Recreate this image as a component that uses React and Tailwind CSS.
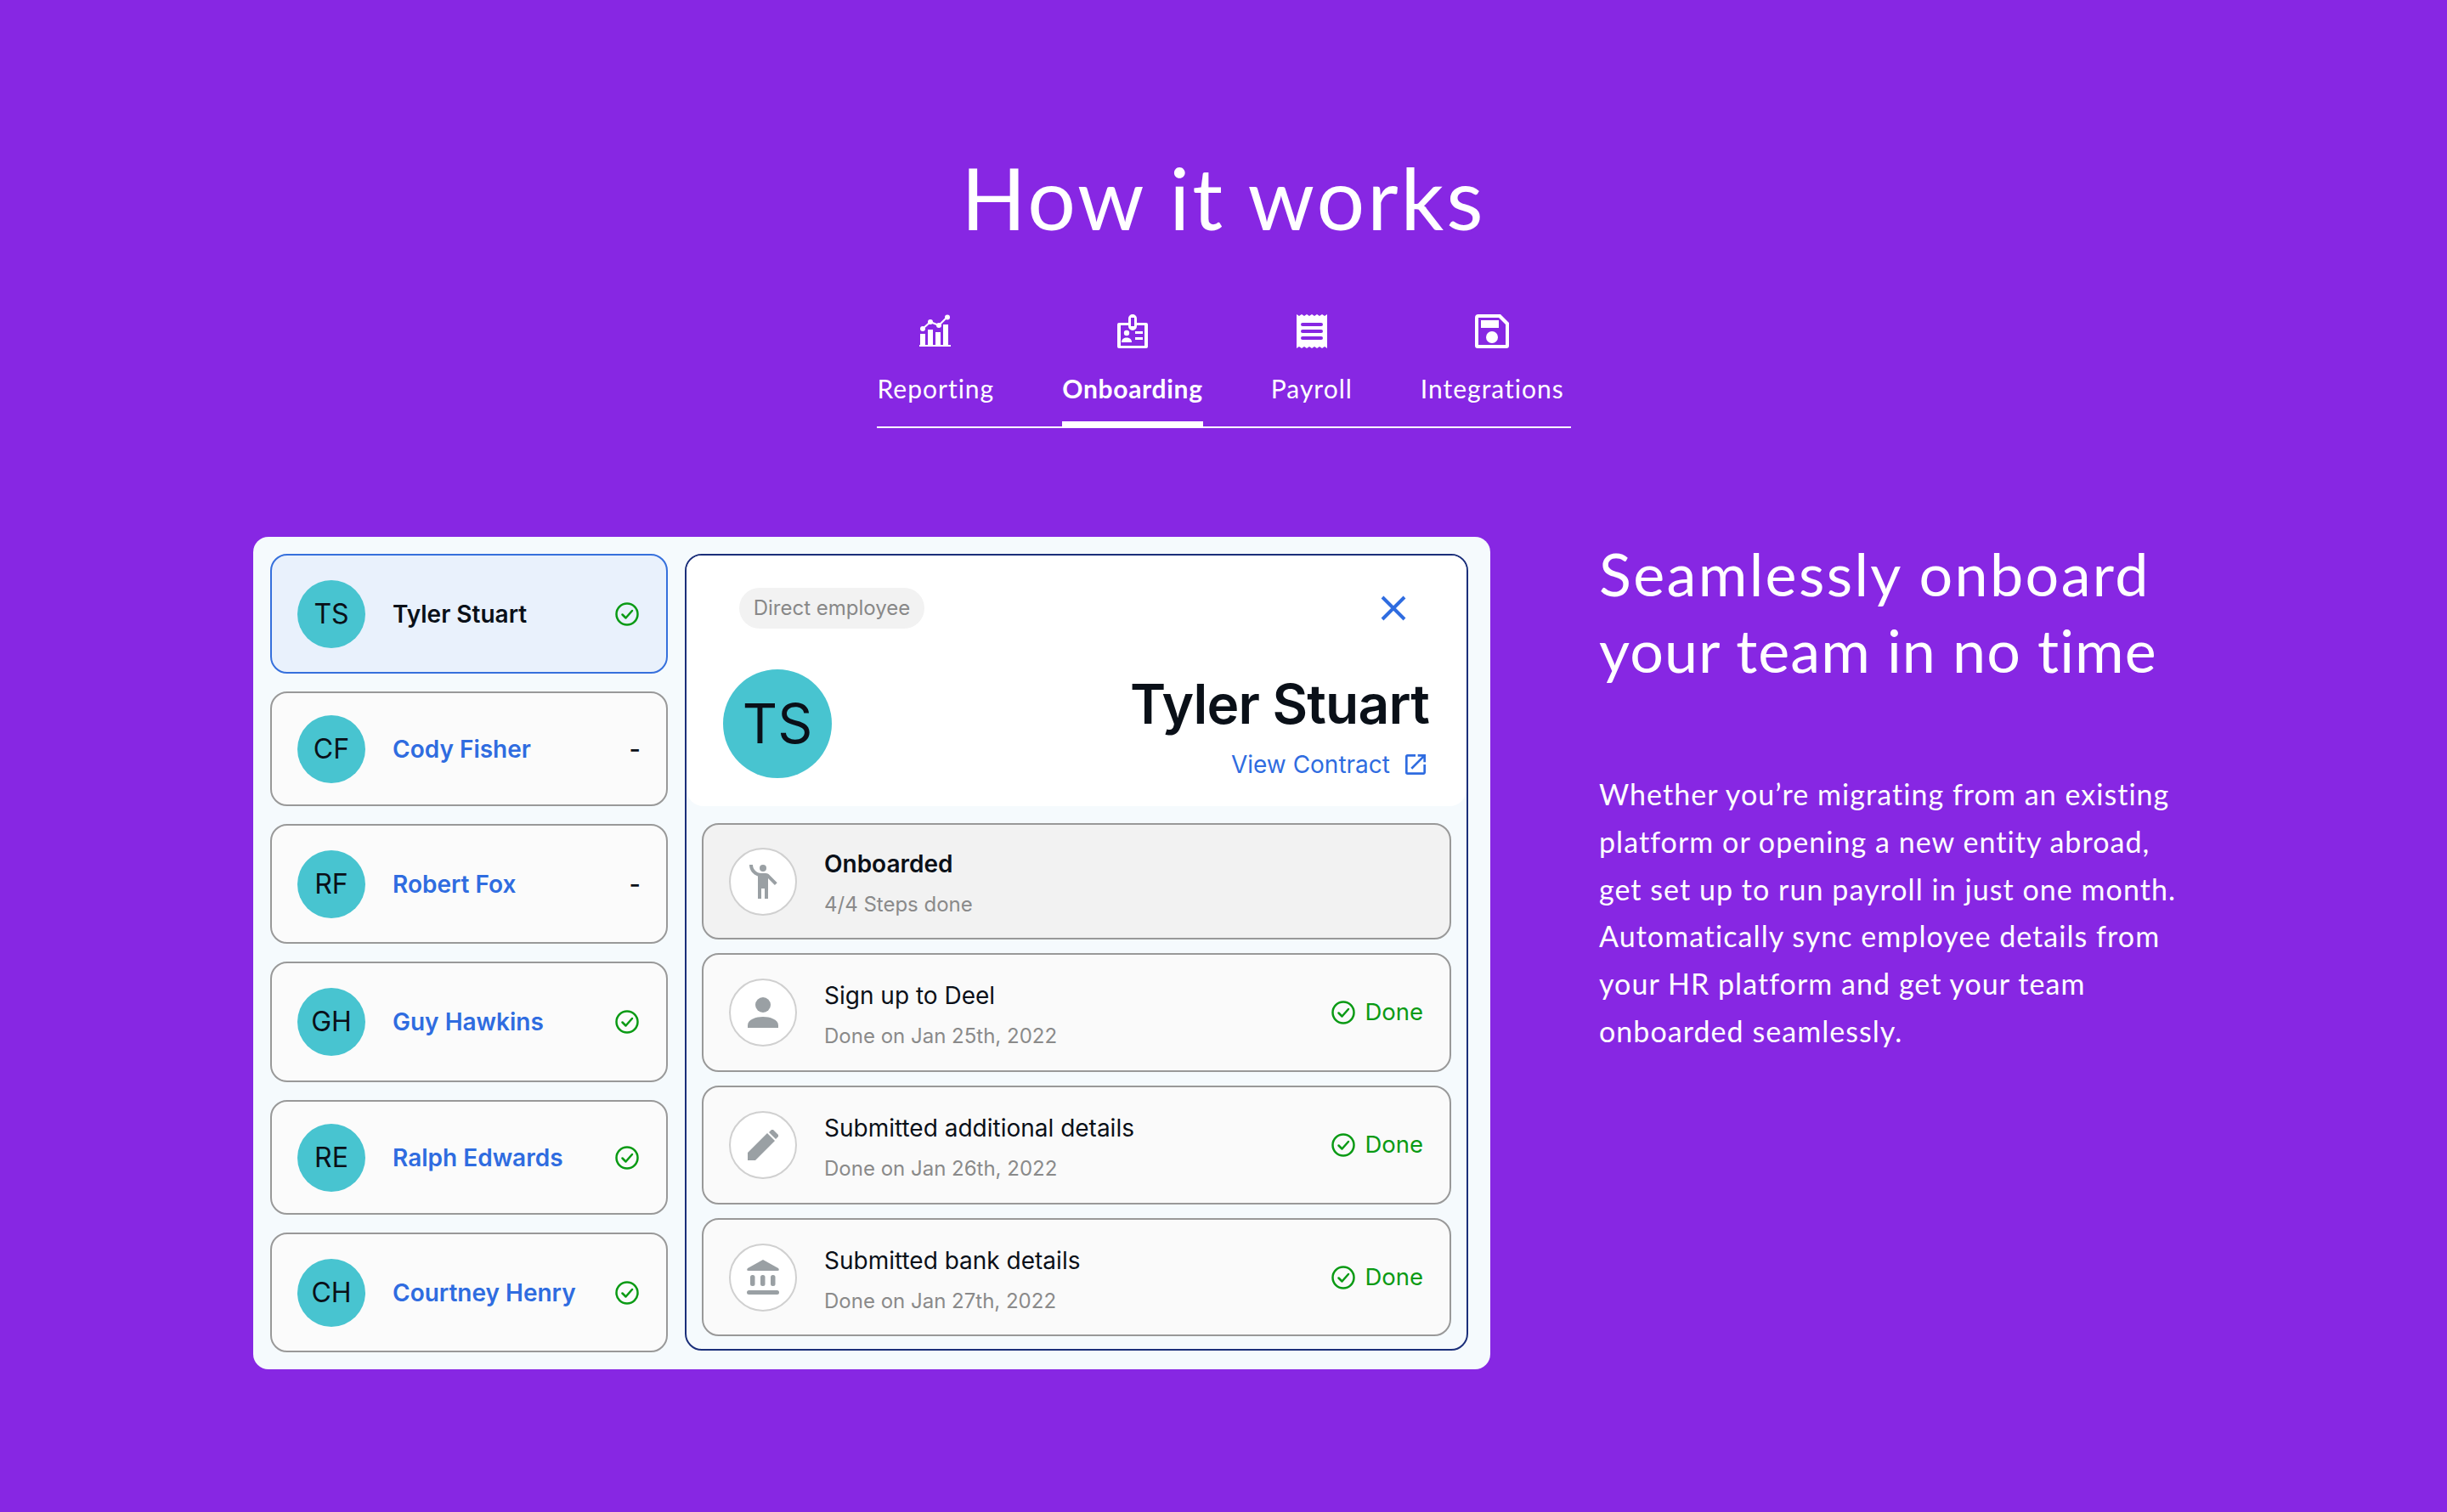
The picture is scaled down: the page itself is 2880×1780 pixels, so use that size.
import React from "react";
import { MdEmojiPeople, MdOpenInNew } from "react-icons/md";

const people = [
  { initials: "TS", name: "Tyler Stuart", done: true, active: true, height: "h-[141px]" },
  { initials: "CF", name: "Cody Fisher", done: false, height: "h-[135px]" },
  { initials: "RF", name: "Robert Fox", done: false, height: "h-[141px]" },
  { initials: "GH", name: "Guy Hawkins", done: true, height: "h-[142px]" },
  { initials: "RE", name: "Ralph Edwards", done: true, height: "h-[135px]" },
  { initials: "CH", name: "Courtney Henry", done: true, height: "h-[141px]" },
];

const PersonGlyph = () => (
  <svg width="36" height="36" viewBox="0 0 36 36" fill="#9aa0a4">
    <circle cx="18" cy="9" r="9" />
    <path d="M0 36v-3C0 26 10 23 18 23s18 3 18 10v3z" />
  </svg>
);

const PencilGlyph = () => (
  <svg width="36" height="36" viewBox="0 0 36 36" fill="#9aa0a4">
    <path d="M0 27 23 4l9 9L9 36H0z" />
    <path d="M25 3l3-3q1-1 2 0l6 6q1 1 0 2l-3 3z" />
  </svg>
);

const BankGlyph = () => (
  <svg width="38" height="41" viewBox="0 0 38 41" fill="#9aa0a4">
    <path d="M19 0 37 10q2 3-1 3H2q-3 0-1-3z" />
    <rect x="4" y="18" width="5.500" height="13" rx="2.500" />
    <rect x="16" y="18" width="5.500" height="13" rx="2.500" />
    <rect x="28" y="18" width="5.500" height="13" rx="2.500" />
    <rect x="0" y="36" width="38" height="5" rx="2.500" />
  </svg>
);

const WaveGlyph = () => <MdEmojiPeople size={48} color="#9aa0a4" />;

const steps = [
  { title: "Sign up to Deel", sub: "Done on Jan 25th, 2022", icon: PersonGlyph, height: "h-[140px]" },
  { title: "Submitted additional details", sub: "Done on Jan 26th, 2022", icon: PencilGlyph, height: "h-[140px]" },
  { title: "Submitted bank details", sub: "Done on Jan 27th, 2022", icon: BankGlyph, height: "h-[139px]" },
];

const ReportingIcon = () => (
  <svg width="40" height="40" viewBox="0 0 40 40" fill="white">
    <rect x="2" y="23" width="6" height="13" />
    <rect x="11" y="18" width="6" height="18" />
    <rect x="20" y="21" width="6" height="15" />
    <rect x="29" y="12" width="6" height="24" />
    <rect x="1" y="36" width="37" height="2" />
    <path d="M5 17 L14 9 L24 13 L34 3" stroke="white" strokeWidth="2" fill="none" />
    <circle cx="5" cy="17" r="3" />
    <circle cx="14" cy="9" r="3" />
    <circle cx="24" cy="13" r="3" />
    <circle cx="34" cy="3.5" r="3" />
  </svg>
);

const BadgeIcon = () => (
  <svg width="40" height="40" viewBox="0 0 40 40" fill="white">
    <path d="M4 10h11v3H6v24h28V13h-9v-3h11a2 2 0 0 1 2 2v26a2 2 0 0 1-2 2H4a2 2 0 0 1-2-2V12a2 2 0 0 1 2-2z" />
    <path fillRule="evenodd" d="M20 0a5 5 0 0 1 5 5v9a5 5 0 0 1-10 0V5a5 5 0 0 1 5-5zm-2 4v10h4V4z" />
    <circle cx="13" cy="22" r="3.2" />
    <path d="M7 33c0-4 3-5.500 6-5.500s6 1.500 6 5.500z" />
    <rect x="23" y="20" width="9" height="3" />
    <rect x="23" y="27" width="9" height="3" />
  </svg>
);

const ReceiptIcon = () => (
  <svg width="40" height="40" viewBox="0 0 40 40" fill="white">
    <path
      fillRule="evenodd"
      d="M2 0l3 2 3-2 3 2 3-2 3 2 3-2 3 2 3-2 3 2 3-2 3 2 3-2v40l-3-2-3 2-3-2-3 2-3-2-3 2-3-2-3 2-3-2-3 2-3-2-3 2zM9 10a2 2 0 0 0 0 4h22a2 2 0 0 0 0-4zM9 18a2 2 0 0 0 0 4h22a2 2 0 0 0 0-4zM9 26a2 2 0 0 0 0 4h22a2 2 0 0 0 0-4z"
    />
  </svg>
);

const SaveIcon = () => (
  <svg width="40" height="40" viewBox="0 0 40 40" fill="white">
    <path
      fillRule="evenodd"
      d="M4 0h26l10 10v27a3 3 0 0 1-3 3H3a3 3 0 0 1-3-3V4a4 4 0 0 1 4-4zm0 4v32h32V12l-8-8z"
    />
    <rect x="7" y="7" width="21" height="9" />
    <circle cx="20" cy="27" r="7" />
  </svg>
);

const tabs = [
  { label: "Reporting", icon: ReportingIcon },
  { label: "Onboarding", icon: BadgeIcon, active: true },
  { label: "Payroll", icon: ReceiptIcon },
  { label: "Integrations", icon: SaveIcon },
];

const CheckIcon = ({ size = 28 }) => (
  <svg width={size} height={size} viewBox="0 0 28 28" fill="none" stroke="#0a9a14" strokeWidth="2.500" className="shrink-0">
    <circle cx="14" cy="14" r="12.500" />
    <path d="M8.500 14.500 L12.500 18.500 L20 10" strokeLinecap="round" strokeLinejoin="round" />
  </svg>
);

function PersonRow({ person }) {
  return (
    <div
      className={`flex items-center pl-[30px] pr-[32px] rounded-[20px] border-2 ${person.height} ${
        person.active ? "bg-[#e9f1fc] border-[#3670dc]" : "bg-[#fbfbfb] border-[#999999]"
      }`}
    >
      <div className="w-[80px] h-[80px] rounded-full bg-[#48c4d0] flex items-center justify-center text-[32px] text-[#0a1018] shrink-0">
        {person.initials}
      </div>
      <div className={`ml-[32px] flex-1 font-semibold text-[28px] ${person.active ? "text-[#0a1018]" : "text-[#2f6ce0]"}`}>
        {person.name}
      </div>
      {person.done ? <CheckIcon /> : <span className="text-[29px] font-medium text-[#0a1018] leading-none -mr-[2px]">-</span>}
    </div>
  );
}

function StepRow({ title, sub, icon: Icon, onboarded, done = true, height }) {
  return (
    <div
      className={`flex items-center pl-[30px] pr-[31px] rounded-[20px] border-2 border-[#999999] ${height} ${
        onboarded ? "bg-[#f2f2f2]" : "bg-[#fafafa]"
      }`}
    >
      <div className="w-[80px] h-[80px] rounded-full bg-white border-2 border-[#d0d0d0] flex items-center justify-center shrink-0">
        <Icon />
      </div>
      <div className={`ml-[32px] flex-1 flex flex-col gap-[12px] ${onboarded ? "pt-[6px]" : "pt-[8px]"}`}>
        <div className={`text-[28px] leading-[36px] text-[#0a1018] ${onboarded ? "font-semibold" : ""}`}>{title}</div>
        <div className="text-[24px] leading-[36px] text-[#8a8a8a]">{sub}</div>
      </div>
      {done && (
        <div className="flex items-center gap-[11px] text-[27.5px] text-[#0a9a14]">
          <CheckIcon />
          <span>Done</span>
        </div>
      )}
    </div>
  );
}

export default function App() {
  return (
    <div className="w-[2880px] h-[1780px] bg-[#8727e3] text-white font-['Lato',sans-serif] overflow-hidden flex flex-col">
      <h1 className="text-center text-[100px] leading-[120px] mt-[172px] font-normal tracking-[3px]">How it works</h1>

      {/* Tabs */}
      <div className="self-center flex gap-[80px] border-b-2 border-white mt-[78px] w-[817px] pl-[1px]">
        {tabs.map(({ label, icon: Icon, active }) => (
          <div key={label} className={`flex flex-col items-center ${active ? "border-b-[8px] border-white -mb-[2px]" : ""}`}>
            <Icon />
            <div className={`mt-[28px] text-[30px] leading-[38px] pb-[20px] ${active ? "font-bold tracking-[0.7px]" : "tracking-[1px]"}`}>
              {label}
            </div>
          </div>
        ))}
      </div>

      <div className="flex mt-[128px] pl-[298px]">
        {/* Product card */}
        <div className="w-[1456px] h-[980px] bg-[#f5fafd] rounded-[18px] flex gap-[20px] pl-[20px] pt-[20px] font-['Inter',sans-serif]">
          <div className="w-[468px] flex flex-col gap-[21px]">
            {people.map((p) => (
              <PersonRow key={p.initials} person={p} />
            ))}
          </div>

          <div className="w-[922px] h-[938px] rounded-[20px] border-2 border-[#1b2f7a] overflow-hidden flex flex-col">
            <div className="bg-white h-[295px] rounded-b-[20px] pl-[62px] pr-[44px] pt-[38px] shrink-0">
              <div className="flex items-center justify-between pr-[27px]">
                <div className="h-[48px] w-[218px] rounded-full bg-[#f2f2f2] text-[24px] text-[#888888] flex items-center justify-center">
                  Direct employee
                </div>
                <svg width="30" height="30" viewBox="0 0 30 30" stroke="#2f6ce0" strokeWidth="4" fill="none">
                  <path d="M2 2 L28 28 M28 2 L2 28" />
                </svg>
              </div>
              <div className="flex items-start justify-between -ml-[19px] mt-[48px]">
                <div className="w-[128px] h-[128px] rounded-full bg-[#48c4d0] flex items-center justify-center text-[64px] text-[#0a1018]">
                  TS
                </div>
                <div className="flex flex-col items-end pt-[5px]">
                  <div className="text-[64px] leading-[72px] font-semibold text-[#0a1018] tracking-[-0.8px]">Tyler Stuart</div>
                  <div className="flex items-center gap-[14px] text-[28px] text-[#2f6ce0] mt-[14px]">
                    View Contract
                    <MdOpenInNew size={32} color="#2f6ce0" />
                  </div>
                </div>
              </div>
            </div>

            <div className="flex flex-col gap-[16px] px-[18px] pt-[20px]">
              <StepRow title="Onboarded" sub="4/4 Steps done" icon={WaveGlyph} onboarded done={false} height="h-[137px]" />
              {steps.map((s) => (
                <StepRow key={s.title} {...s} />
              ))}
            </div>
          </div>
        </div>

        {/* Copy */}
        <div className="ml-[128px] w-[760px]">
          <h2 className="text-[70px] leading-[90px] font-normal -mt-[2px]">
            <span className="block tracking-[2.4px]">Seamlessly onboard</span>
            <span className="block tracking-[1.1px]">your team in no time</span>
          </h2>
          <p className="mt-[97px] text-[34px] leading-[55.8px] tracking-[1.05px]">
            Whether you’re migrating from an existing
            <br />
            platform or opening a new entity abroad,
            <br />
            get set up to run payroll in just one month.
            <br />
            Automatically sync employee details from
            <br />
            your HR platform and get your team
            <br />
            onboarded seamlessly.
          </p>
        </div>
      </div>
    </div>
  );
}
